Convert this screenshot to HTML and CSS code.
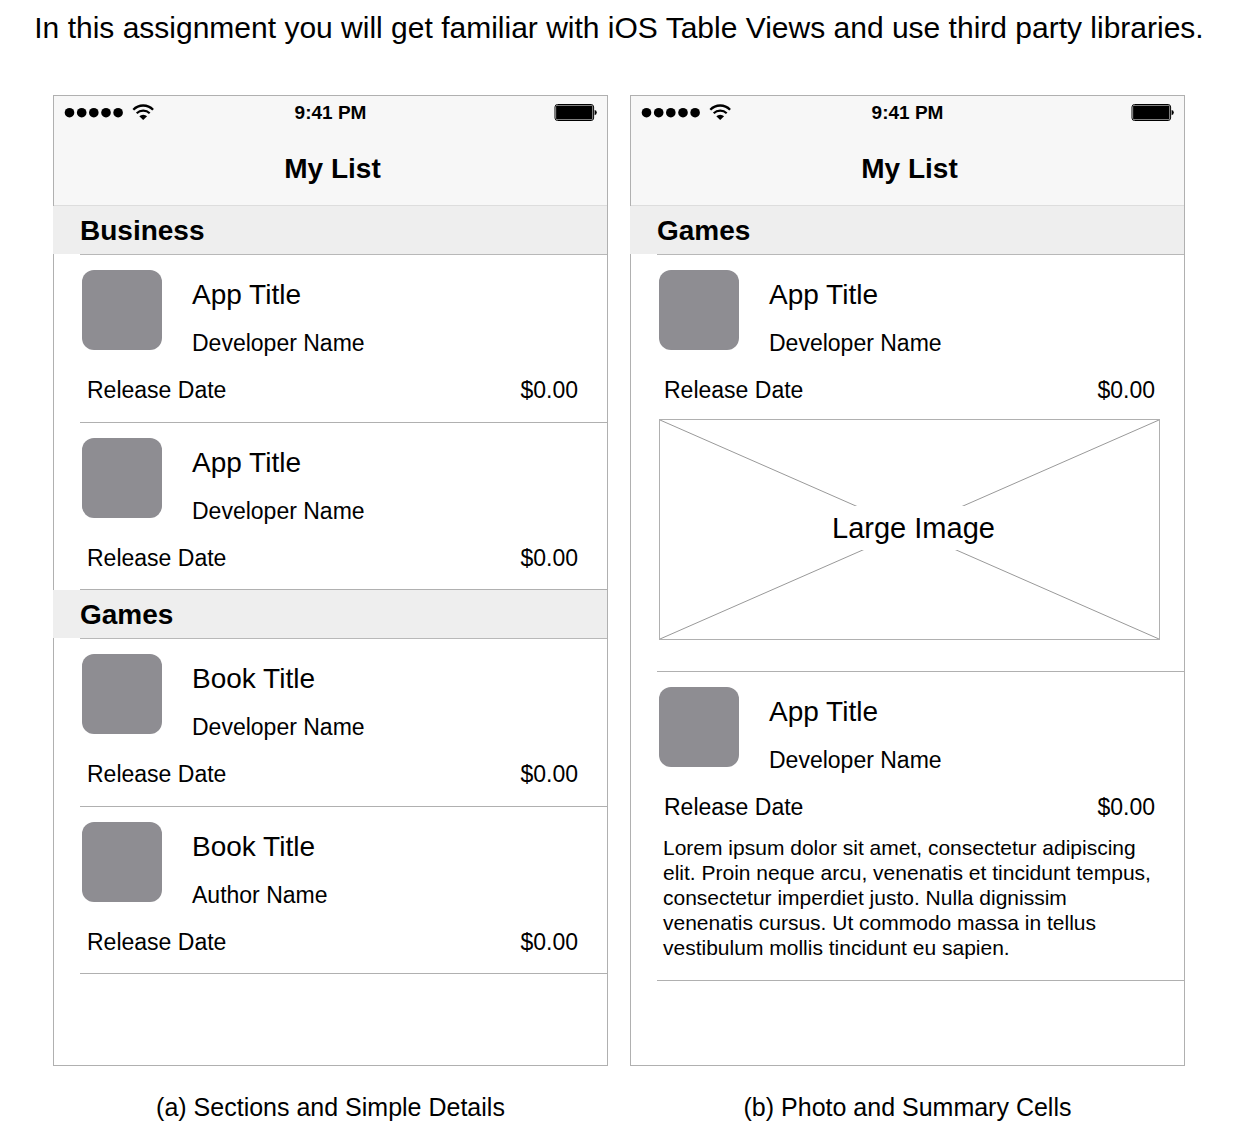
FILE: index.html
```html
<!DOCTYPE html>
<html lang="en">
<head>
<meta charset="utf-8">
<title>iOS Table Views</title>
<link rel="stylesheet" href="styles.css">
</head>
<body>
<svg class="defs" aria-hidden="true">
  <symbol id="signal" viewBox="0 0 90 18">
    <circle cx="5.500" cy="8.700" r="4.800"/><circle cx="17.700" cy="8.700" r="4.800"/><circle cx="29.800" cy="8.700" r="4.800"/><circle cx="42" cy="8.700" r="4.800"/><circle cx="54.100" cy="8.700" r="4.800"/>
    <path d="M69.300 5.700a13.800 13.800 0 0 1 19.800 0" fill="none" stroke="#000" stroke-width="2.300"/>
    <path d="M72.700 9.300a9.200 9.200 0 0 1 13 0" fill="none" stroke="#000" stroke-width="2.100"/>
    <path d="M75.300 12.300a5.400 5.400 0 0 1 7.800 0L79.200 16z"/>
  </symbol>
  <symbol id="battery" viewBox="0 0 43 18">
    <rect x="1" y=".5" width="38.600" height="16" rx="2.500" fill="#fff" stroke="#000"/>
    <rect x="2.100" y="1.600" width="36.400" height="13.800" rx="1"/>
    <path d="M40.600 5.900q2.200.4 2.200 2.700t-2.200 2.700z"/>
  </symbol>
</svg>
<main class="page">
  <p class="intro">In this assignment you will get familiar with iOS Table Views and use third party libraries.</p>
  <div class="figures">
    <figure class="figure">
      <div class="phone">
        <header class="navbar">
          <div class="status">
            <svg class="signal"><use href="#signal"/></svg>
            <span class="time">9:41 PM</span>
            <svg class="battery"><use href="#battery"/></svg>
          </div>
          <h1 class="nav-title">My List</h1>
        </header>
        <h2 class="section">Business</h2>
        <ul class="list">
          <li class="cell">
            <div class="app"><div class="icon"></div><div><h3 class="title">App Title</h3><p class="name">Developer Name</p></div></div>
            <div class="meta"><span>Release Date</span><span>$0.00</span></div>
          </li>
          <li class="cell">
            <div class="app"><div class="icon"></div><div><h3 class="title">App Title</h3><p class="name">Developer Name</p></div></div>
            <div class="meta"><span>Release Date</span><span>$0.00</span></div>
          </li>
        </ul>
        <h2 class="section">Games</h2>
        <ul class="list">
          <li class="cell">
            <div class="app"><div class="icon"></div><div><h3 class="title">Book Title</h3><p class="name">Developer Name</p></div></div>
            <div class="meta"><span>Release Date</span><span>$0.00</span></div>
          </li>
          <li class="cell">
            <div class="app"><div class="icon"></div><div><h3 class="title">Book Title</h3><p class="name">Author Name</p></div></div>
            <div class="meta"><span>Release Date</span><span>$0.00</span></div>
          </li>
        </ul>
      </div>
      <figcaption class="caption">(a) Sections and Simple Details</figcaption>
    </figure>
    <figure class="figure">
      <div class="phone">
        <header class="navbar">
          <div class="status">
            <svg class="signal"><use href="#signal"/></svg>
            <span class="time">9:41 PM</span>
            <svg class="battery"><use href="#battery"/></svg>
          </div>
          <h1 class="nav-title">My List</h1>
        </header>
        <h2 class="section">Games</h2>
        <ul class="list">
          <li class="cell">
            <div class="app"><div class="icon"></div><div><h3 class="title">App Title</h3><p class="name">Developer Name</p></div></div>
            <div class="meta"><span>Release Date</span><span>$0.00</span></div>
            <div class="photo">
              <svg class="cross" viewBox="0 0 100 100" preserveAspectRatio="none"><path d="M0 0L100 100M0 100L100 0" vector-effect="non-scaling-stroke"/></svg>
              <span class="photo-label">Large Image</span>
            </div>
          </li>
          <li class="cell">
            <div class="app"><div class="icon"></div><div><h3 class="title">App Title</h3><p class="name">Developer Name</p></div></div>
            <div class="meta"><span>Release Date</span><span>$0.00</span></div>
            <p class="summary">Lorem ipsum dolor sit amet, consectetur adipiscing elit. Proin neque arcu, venenatis et tincidunt tempus, consectetur imperdiet justo. Nulla dignissim venenatis cursus. Ut commodo massa in tellus vestibulum mollis tincidunt eu sapien.</p>
          </li>
        </ul>
      </div>
      <figcaption class="caption">(b) Photo and Summary Cells</figcaption>
    </figure>
  </div>
</main>
</body>
</html>
```
FILE: styles.css
```css
* { box-sizing: border-box; }
body, h1, h2, h3, p, ul, figure { margin: 0; padding: 0; }
body {
  background: #fff;
  color: #000;
  font-family: "Liberation Sans", Arial, sans-serif;
}
.defs { display: none; }
.page { padding: 12px 65px 14px 53px; }
.intro {
  margin: 0 -30px 51px;
  font-size: 30px;
  line-height: 32px;
  text-align: center;
}
.figures {
  display: grid;
  grid-template-columns: 1fr 1fr;
  gap: 22px;
}
.figure { display: flex; flex-direction: column; }
.phone {
  flex: 1;
  min-height: 971px;
  border: 1px solid #b0b0b0;
}
.navbar {
  height: 110px;
  padding: 0 10px;
  background: #f7f7f7;
  border-bottom: 1px solid #ddd;
}
.status {
  display: grid;
  grid-template-columns: 1fr auto 1fr;
  align-items: center;
  height: 34px;
}
.signal { width: 90px; height: 18px; }
.battery { width: 43px; height: 18px; justify-self: end; }
.time { font-size: 19px; font-weight: bold; line-height: 24px; }
.nav-title {
  padding: 23px 0 0 4px;
  font-size: 28px;
  line-height: 32px;
  text-align: center;
}
.section {
  margin-left: -1px;
  padding: 9px 0 7px 27px;
  background: #eee;
  font-size: 28px;
  line-height: 32px;
}
.list {
  margin-left: 26px;
  border-top: 1px solid #b8b8b8;
  list-style: none;
}
.cell {
  min-height: 168px;
  padding: 15px 24px 0 2px;
  border-bottom: 1px solid #b0b0b0;
}
.cell + .cell { min-height: 167px; }
.app { display: flex; gap: 30px; }
.icon {
  width: 80px;
  height: 80px;
  border-radius: 12px;
  background: #8e8d92;
}
.title {
  padding-top: 9px;
  font-size: 28px;
  font-weight: normal;
  line-height: 32px;
}
.name { padding-top: 18px; font-size: 23px; line-height: 28px; }
.meta {
  display: flex;
  justify-content: space-between;
  padding: 19px 5px 0;
  font-size: 23px;
  line-height: 28px;
}
.photo {
  display: grid;
  height: 221px;
  margin: 15px 0 31px;
  border: 1px solid #b0b0b0;
}
.cross {
  grid-area: 1 / 1;
  width: 100%;
  height: 219px;
  stroke: #999;
}
.photo-label {
  grid-area: 1 / 1;
  place-self: center;
  margin: 0 0 4px 8px;
  padding: 5px 0;
  background: #fff;
  font-size: 29px;
  line-height: 34px;
}
.summary {
  padding: 14px 0 20px 4px;
  font-size: 21px;
  line-height: 25px;
}
.caption {
  padding-top: 26px;
  font-size: 25px;
  line-height: 30px;
  text-align: center;
}
```
